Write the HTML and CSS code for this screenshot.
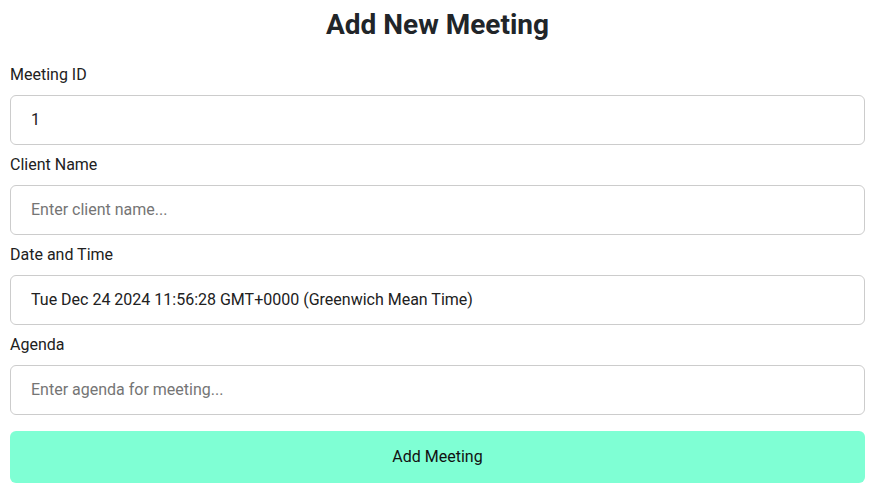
FILE: index.html
```html
<!DOCTYPE html>
<html lang="en">
<head>
<meta charset="utf-8">
<title>Add New Meeting</title>
<link rel="stylesheet" href="styles.css">
</head>
<body>
<div class="page">
  <h1 class="title">Add New Meeting</h1>
  <form class="form">
    <label class="label" for="mid">Meeting ID</label>
    <input class="field" id="mid" type="text" value="1">
    <label class="label" for="client">Client Name</label>
    <input class="field" id="client" type="text" placeholder="Enter client name...">
    <label class="label" for="dt">Date and Time</label>
    <input class="field" id="dt" type="text" value="Tue Dec 24 2024 11:56:28 GMT+0000 (Greenwich Mean Time)">
    <label class="label" for="agenda">Agenda</label>
    <input class="field" id="agenda" type="text" placeholder="Enter agenda for meeting...">
    <button class="submit" type="button">Add Meeting</button>
  </form>
</div>
</body>
</html>
```
FILE: styles.css
```css
* { box-sizing: border-box; }
html, body { margin: 0; padding: 0; background: #fff; }
body {
  font-family: Roboto, "Liberation Sans", sans-serif;
  color: #212121;
}
.page {
  width: 855px;
  margin-left: 10px;
}
.title {
  margin: 5px 0 18px;
  font-size: 28px;
  line-height: 40px;
  font-weight: 700;
  text-align: center;
  color: #212529;
}
.form {
  display: flex;
  flex-direction: column;
  gap: 8px;
}
.label {
  font-size: 16px;
  line-height: 24px;
  color: #212121;
}
.field {
  height: 50px;
  width: 100%;
  padding: 0 20px 2px;
  border: 1px solid #cccccc;
  border-radius: 6px;
  font-family: Roboto, "Liberation Sans", sans-serif;
  font-size: 16px;
  color: #212121;
  background: #fff;
  outline: none;
}
.field::placeholder { color: #757575; opacity: 1; }
.submit {
  margin-top: 8px;
  height: 52px;
  width: 100%;
  padding: 0 0 2px;
  border: none;
  border-radius: 6px;
  background: #7fffd4;
  font-family: Roboto, "Liberation Sans", sans-serif;
  font-size: 16px;
  color: #111;
  cursor: pointer;
}
```
